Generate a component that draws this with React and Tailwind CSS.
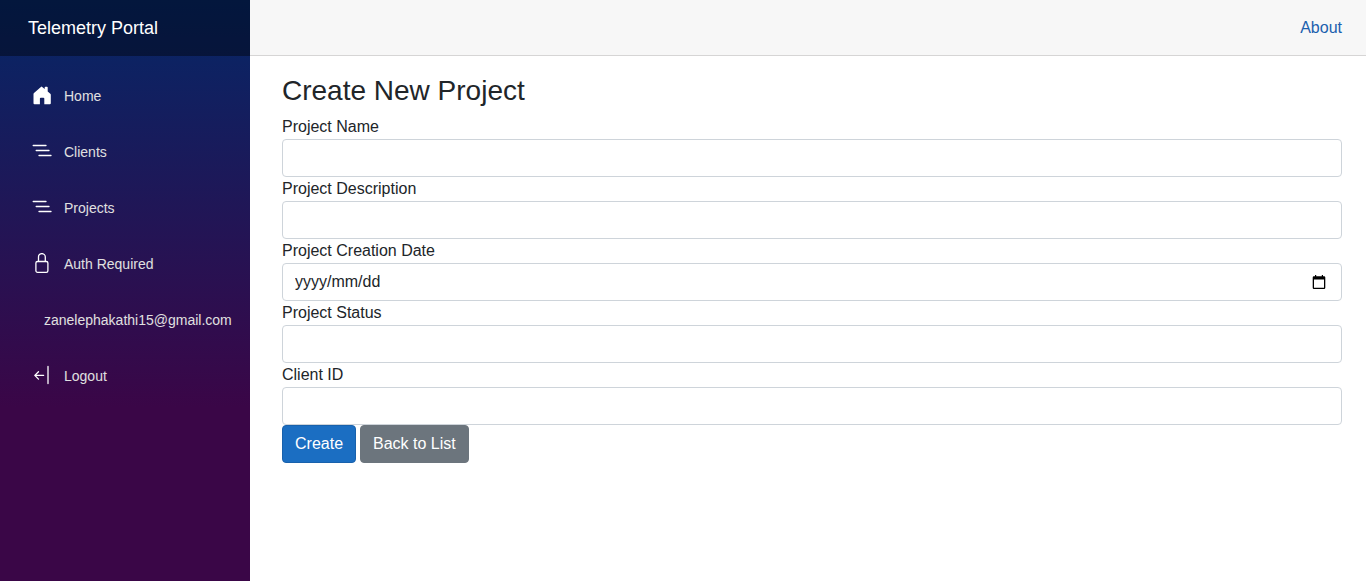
import React, { useState } from "react";

function HomeIcon() {
  return (
    <svg viewBox="0 0 20 20" className="size-5" fill="currentColor" aria-hidden="true">
      <path d="M8.900 1.900a1 1 0 0 1 1.300 0l2.500 2.100V2.500q0-.8.800-.8h1.400q.8 0 .8.800v4l2.600 2.200q.5.400.5 1V18.300q0 1-1 1H12.300V13.600q0-.9-.9-.9H8.800q-.9 0-.9.9V19.300H2.500q-1 0-1-1V9q0-.6.5-1z" />
    </svg>
  );
}

function ListIcon() {
  return (
    <svg viewBox="0 0 20 20" className="size-5" fill="none" stroke="currentColor" strokeWidth="1.3" strokeLinecap="round" aria-hidden="true">
      <path d="M1.200 4.500H14M4.200 9.500H17M7 14.500h12" />
    </svg>
  );
}

function LockIcon() {
  return (
    <svg viewBox="0 0 20 20" className="size-5" fill="none" stroke="currentColor" strokeWidth="1.3" aria-hidden="true">
      <rect x="3.900" y="8.500" width="12" height="10.800" rx="1.600" />
      <path d="M6.500 8.500V4a3.300 3.300 0 0 1 6.800 0v4.500" />
    </svg>
  );
}

function LogoutIcon() {
  return (
    <svg viewBox="0 0 20 20" className="size-5" fill="none" stroke="currentColor" strokeWidth="1.3" strokeLinecap="round" strokeLinejoin="round" aria-hidden="true">
      <path d="M16 1.500v17M11.600 10.400H2.900M6.500 6.700 2.800 10.400l3.700 3.700" />
    </svg>
  );
}

function CalendarIcon() {
  return (
    <svg viewBox="0 0 14 14" className="size-3.5" aria-hidden="true">
      <path fill="currentColor" fillRule="evenodd" d="M3 0h1.200v1.200h5.600V0H11v1.200h1.100q1.200 0 1.200 1.200v10.400q0 1.200-1.200 1.200H1.900Q.7 14 .7 12.800V2.400Q.7 1.200 1.900 1.200H3zM2 4.500v8.200h10V4.500z" />
    </svg>
  );
}

const links = [
  { label: "Home", icon: HomeIcon },
  { label: "Clients", icon: ListIcon },
  { label: "Projects", icon: ListIcon },
  { label: "Auth Required", icon: LockIcon },
  { label: "zanelephakathi15@gmail.com" },
  { label: "Logout", icon: LogoutIcon },
];

const fields = [
  { id: "name", label: "Project Name" },
  { id: "description", label: "Project Description" },
  { id: "created", label: "Project Creation Date", date: true },
  { id: "status", label: "Project Status" },
  { id: "client", label: "Client ID" },
];

function Sidebar() {
  return (
    <aside className="w-[250px] shrink-0 bg-[linear-gradient(180deg,#052767_0%,#3a0647_70%)]">
      <div className="flex h-14 items-center bg-black/40 px-7">
        <a href="#home" className="text-lg text-white">Telemetry Portal</a>
      </div>
      <nav className="flex flex-col gap-2 px-4 pt-4">
        {links.map(({ label, icon: Icon }) => (
          <a
            key={label}
            href="#"
            className={"flex h-12 items-center whitespace-nowrap text-sm text-[#e0e0e0] " + (Icon ? "pl-4" : "pl-7")}
          >
            {Icon && (
              <span className="flex w-8 pb-0.5 text-white">
                <Icon />
              </span>
            )}
            {label}
          </a>
        ))}
      </nav>
    </aside>
  );
}

function Field({ id, label, date }) {
  const [value, setValue] = useState("");
  return (
    <div>
      <label htmlFor={id} className="block leading-6">{label}</label>
      <div className="flex h-[38px] items-center rounded border border-[#ced4da] bg-white focus-within:border-blue-400">
        <input
          id={id}
          type="text"
          value={value}
          onChange={(e) => setValue(e.target.value)}
          placeholder={date ? "yyyy/mm/dd" : undefined}
          className="h-full min-w-0 flex-1 bg-transparent px-3 outline-none placeholder:text-[#212529]"
        />
        {date && (
          <button type="button" aria-label="Pick a date" className="mr-[15px] text-black">
            <CalendarIcon />
          </button>
        )}
      </div>
    </div>
  );
}

export default function App() {
  return (
    <div className="flex min-h-screen bg-white font-['Liberation_Sans',Arial,sans-serif] text-base text-[#212529]">
      <Sidebar />
      <main className="min-w-0 flex-1">
        <header className="flex h-14 items-center justify-end border-b border-[#d6d5d5] bg-[#f7f7f7] px-6">
          <a href="#about" className="text-[#1b60ae]">About</a>
        </header>
        <article className="pt-[18px] pr-6 pl-8">
          <h1 className="mb-2 text-[28px] leading-[33px]">Create New Project</h1>
          <form onSubmit={(e) => e.preventDefault()}>
            {fields.map((f) => (
              <Field key={f.id} {...f} />
            ))}
            <div className="flex gap-1">
              <button type="submit" className="h-[38px] rounded border border-[#1861ac] bg-[#1b6ec2] px-3 text-white">Create</button>
              <a href="#projects" className="flex h-[38px] items-center rounded border border-[#6c757d] bg-[#6c757d] px-3 text-white">Back to List</a>
            </div>
          </form>
        </article>
      </main>
    </div>
  );
}
